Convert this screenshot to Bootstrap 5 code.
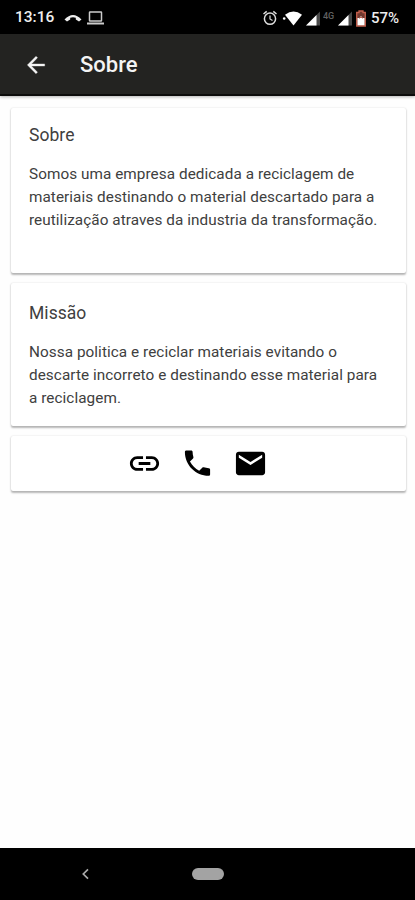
<!DOCTYPE html>
<html lang="pt-BR">
<head>
<meta charset="utf-8">
<meta name="viewport" content="width=device-width, initial-scale=1">
<title>Sobre</title>
<link href="https://cdn.jsdelivr.net/npm/bootstrap@5.3.0/dist/css/bootstrap.min.css" rel="stylesheet">
<style>
body { font-family: Roboto, sans-serif; background: #fefefe; color: #404040; }
svg { display: block; flex: none; }
.status-bar { height: 34px; background: #000; color: #eee; font-size: 15.5px; font-weight: 500; padding: 2px 15px 0; }
.status-bar span { line-height: 1; white-space: nowrap; }
.clock { width: 49px; }
.percent { width: 29px; font-size: 15px; margin-left: 5px; }
.app-bar { height: 62px; background: #232321; border-bottom: 2px solid #0c0c0b; box-shadow: 0 1px 3px rgba(0,0,0,.3); padding: 1px 23px 0; position: relative; }
.app-title { font-size: 22px; font-weight: 500; color: #f4f4f4; margin-left: 31px; line-height: 1; }
.content { padding: 12px 9px 0 11px; }
.panel { background: #fff; border-radius: 2px; box-shadow: 0 1.5px 2px rgba(0,0,0,.28), 0 0 2px rgba(0,0,0,.1); padding: 0 18px; }
.panel h2 { font-size: 17.5px; font-weight: 400; line-height: 24px; margin: 0; letter-spacing: .05px; }
.panel p { font-size: 15.3px; line-height: 23px; margin: 16px 0 0; letter-spacing: .06px; white-space: nowrap; }
.about { height: 165px; padding-top: 14.5px; }
.mission { height: 143px; padding-top: 17.5px; margin-top: 10px; }
.contacts { height: 55px; margin-top: 10px; padding-left: 116px; gap: 17.8px; color: #000; }
.nav-keys { height: 52px; background: #000; padding-left: 80px; }
.home-pill { width: 32px; height: 12px; background: #a3a3a3; margin-left: 101px; }
</style>
</head>
<body>
<div class="d-flex flex-column vh-100 overflow-hidden">
  <div class="status-bar d-flex align-items-center">
    <span class="clock">13:16</span>
    <svg width="18" height="14" viewBox="0 0 18 14"><path d="M.5 8.500Q9-.5 17.500 8.500L15 10.500L11.800 8.600V6.700Q9 5.900 6.200 6.700V8.600L3 10.500Z" fill="#eee"/></svg>
    <svg width="18" height="14" viewBox="0 0 18 14" class="ms-1 me-auto" fill="none" stroke="#ccc"><rect x="3.500" y="1" width="12" height="9" rx=".5" stroke-width="1.500"/><path d="M1 12.500H18" stroke-width="2"/></svg>
    <svg width="15" height="16" viewBox="0 0 15 16" fill="none" stroke="#ddd"><circle cx="7" cy="8.700" r="5.600" stroke-width="1.500"/><path d="M7 5.500V9L9.500 10.500" stroke-width="1.200"/><path d="M.5 4L3.700 1.400M13.500 4L10.300 1.400" stroke-width="1.500"/></svg>
    <svg width="20" height="15" viewBox="0 0 20 15" class="ms-1 me-1" fill="#fff"><circle cx="2.200" cy="7.500" r="1.300"/><path d="M3 3.700Q11.500-2.500 20 3.700L11.500 14.500Z"/></svg>
    <svg width="14" height="15" viewBox="0 0 14 15"><path d="M0 14.500L14 .5V14.500Z" fill="#484848"/><path d="M0 14.500L10.500 4V14.500Z" fill="#fff"/></svg>
    <svg width="13" height="16" viewBox="0 0 13 16" style="margin:0 2px 0 3px"><text x="0" y="9" font-size="9" font-weight="500" fill="#606060">4G</text></svg>
    <svg width="14" height="15" viewBox="0 0 14 15"><path d="M0 14.500L14 .5V14.500Z" fill="#484848"/><path d="M0 14.500L10.500 4V14.500Z" fill="#fff"/></svg>
    <svg width="10" height="17" viewBox="0 0 10 17" class="ms-1"><path d="M3 1H7V2.500H9.300V16H.7V2.500H3Z" fill="#70382e" stroke="#c5604d" stroke-width="1.300"/><path d="M1.500 8H3.500L5 6L6.500 8H8.500V15.300H1.500Z" fill="#fff"/><path d="M3.500 8.500L5 7L6.500 8.500" fill="none" stroke="#c5604d"/></svg>
    <span class="percent">57%</span>
  </div>
  <header class="app-bar d-flex align-items-center">
    <svg width="26" height="26" viewBox="0 0 24 24" fill="#f4f4f4" stroke="#f4f4f4" stroke-width=".3"><path d="M20 11H7.830l5.590-5.590L12 4l-8 8 8 8 1.410-1.410L7.830 13H20v-2z"/></svg>
    <h1 class="app-title mb-0">Sobre</h1>
  </header>
  <main class="content flex-grow-1">
    <section class="panel about">
      <h2>Sobre</h2>
      <p>Somos uma empresa dedicada a reciclagem de<br>materiais destinando o material descartado para a<br>reutilização atraves da industria da transformação.</p>
    </section>
    <section class="panel mission">
      <h2>Missão</h2>
      <p>Nossa politica e reciclar materiais evitando o<br>descarte incorreto e destinando esse material para<br>a reciclagem.</p>
    </section>
    <section class="panel contacts d-flex align-items-center">
      <svg width="35" height="35" viewBox="0 0 24 24" fill="currentColor"><path d="M3.900 12c0-1.710 1.390-3.100 3.100-3.100h4V7H7c-2.760 0-5 2.240-5 5s2.240 5 5 5h4v-1.900H7c-1.710 0-3.100-1.390-3.100-3.100zM8 13h8v-2H8v2zm9-6h-4v1.900h4c1.710 0 3.100 1.390 3.100 3.100s-1.390 3.100-3.100 3.100h-4V17h4c2.760 0 5-2.240 5-5s-2.240-5-5-5z"/></svg>
      <svg width="35" height="35" viewBox="-.5 -.3 25 25" fill="currentColor"><path d="M6.620 10.790c1.440 2.830 3.760 5.140 6.590 6.590l2.200-2.200c.27-.27.67-.36 1.020-.24 1.120.37 2.330.57 3.570.57.55 0 1 .45 1 1V20c0 .55-.45 1-1 1-9.390 0-17-7.610-17-17 0-.55.45-1 1-1h3.500c.55 0 1 .45 1 1 0 1.250.2 2.450.57 3.570.11.35.03.74-.25 1.020l-2.200 2.200z"/></svg>
      <svg width="35" height="35" viewBox="0 0 24 24" fill="currentColor"><path d="M20 4H4c-1.100 0-1.990.9-1.990 2L2 18c0 1.100.9 2 2 2h16c1.100 0 2-.9 2-2V6c0-1.100-.9-2-2-2zm0 4l-8 5-8-5V6l8 5 8-5v2z"/></svg>
    </section>
  </main>
  <footer class="nav-keys d-flex align-items-center">
    <svg width="11" height="14" viewBox="0 0 11 14" fill="none" stroke="#aaa" stroke-width="1.700"><path d="M8 2.300L3.300 7L8 11.700"/></svg>
    <div class="home-pill rounded-pill"></div>
  </footer>
</div>
<script src="https://cdn.jsdelivr.net/npm/bootstrap@5.3.0/dist/js/bootstrap.bundle.min.js"></script>
</body>
</html>
